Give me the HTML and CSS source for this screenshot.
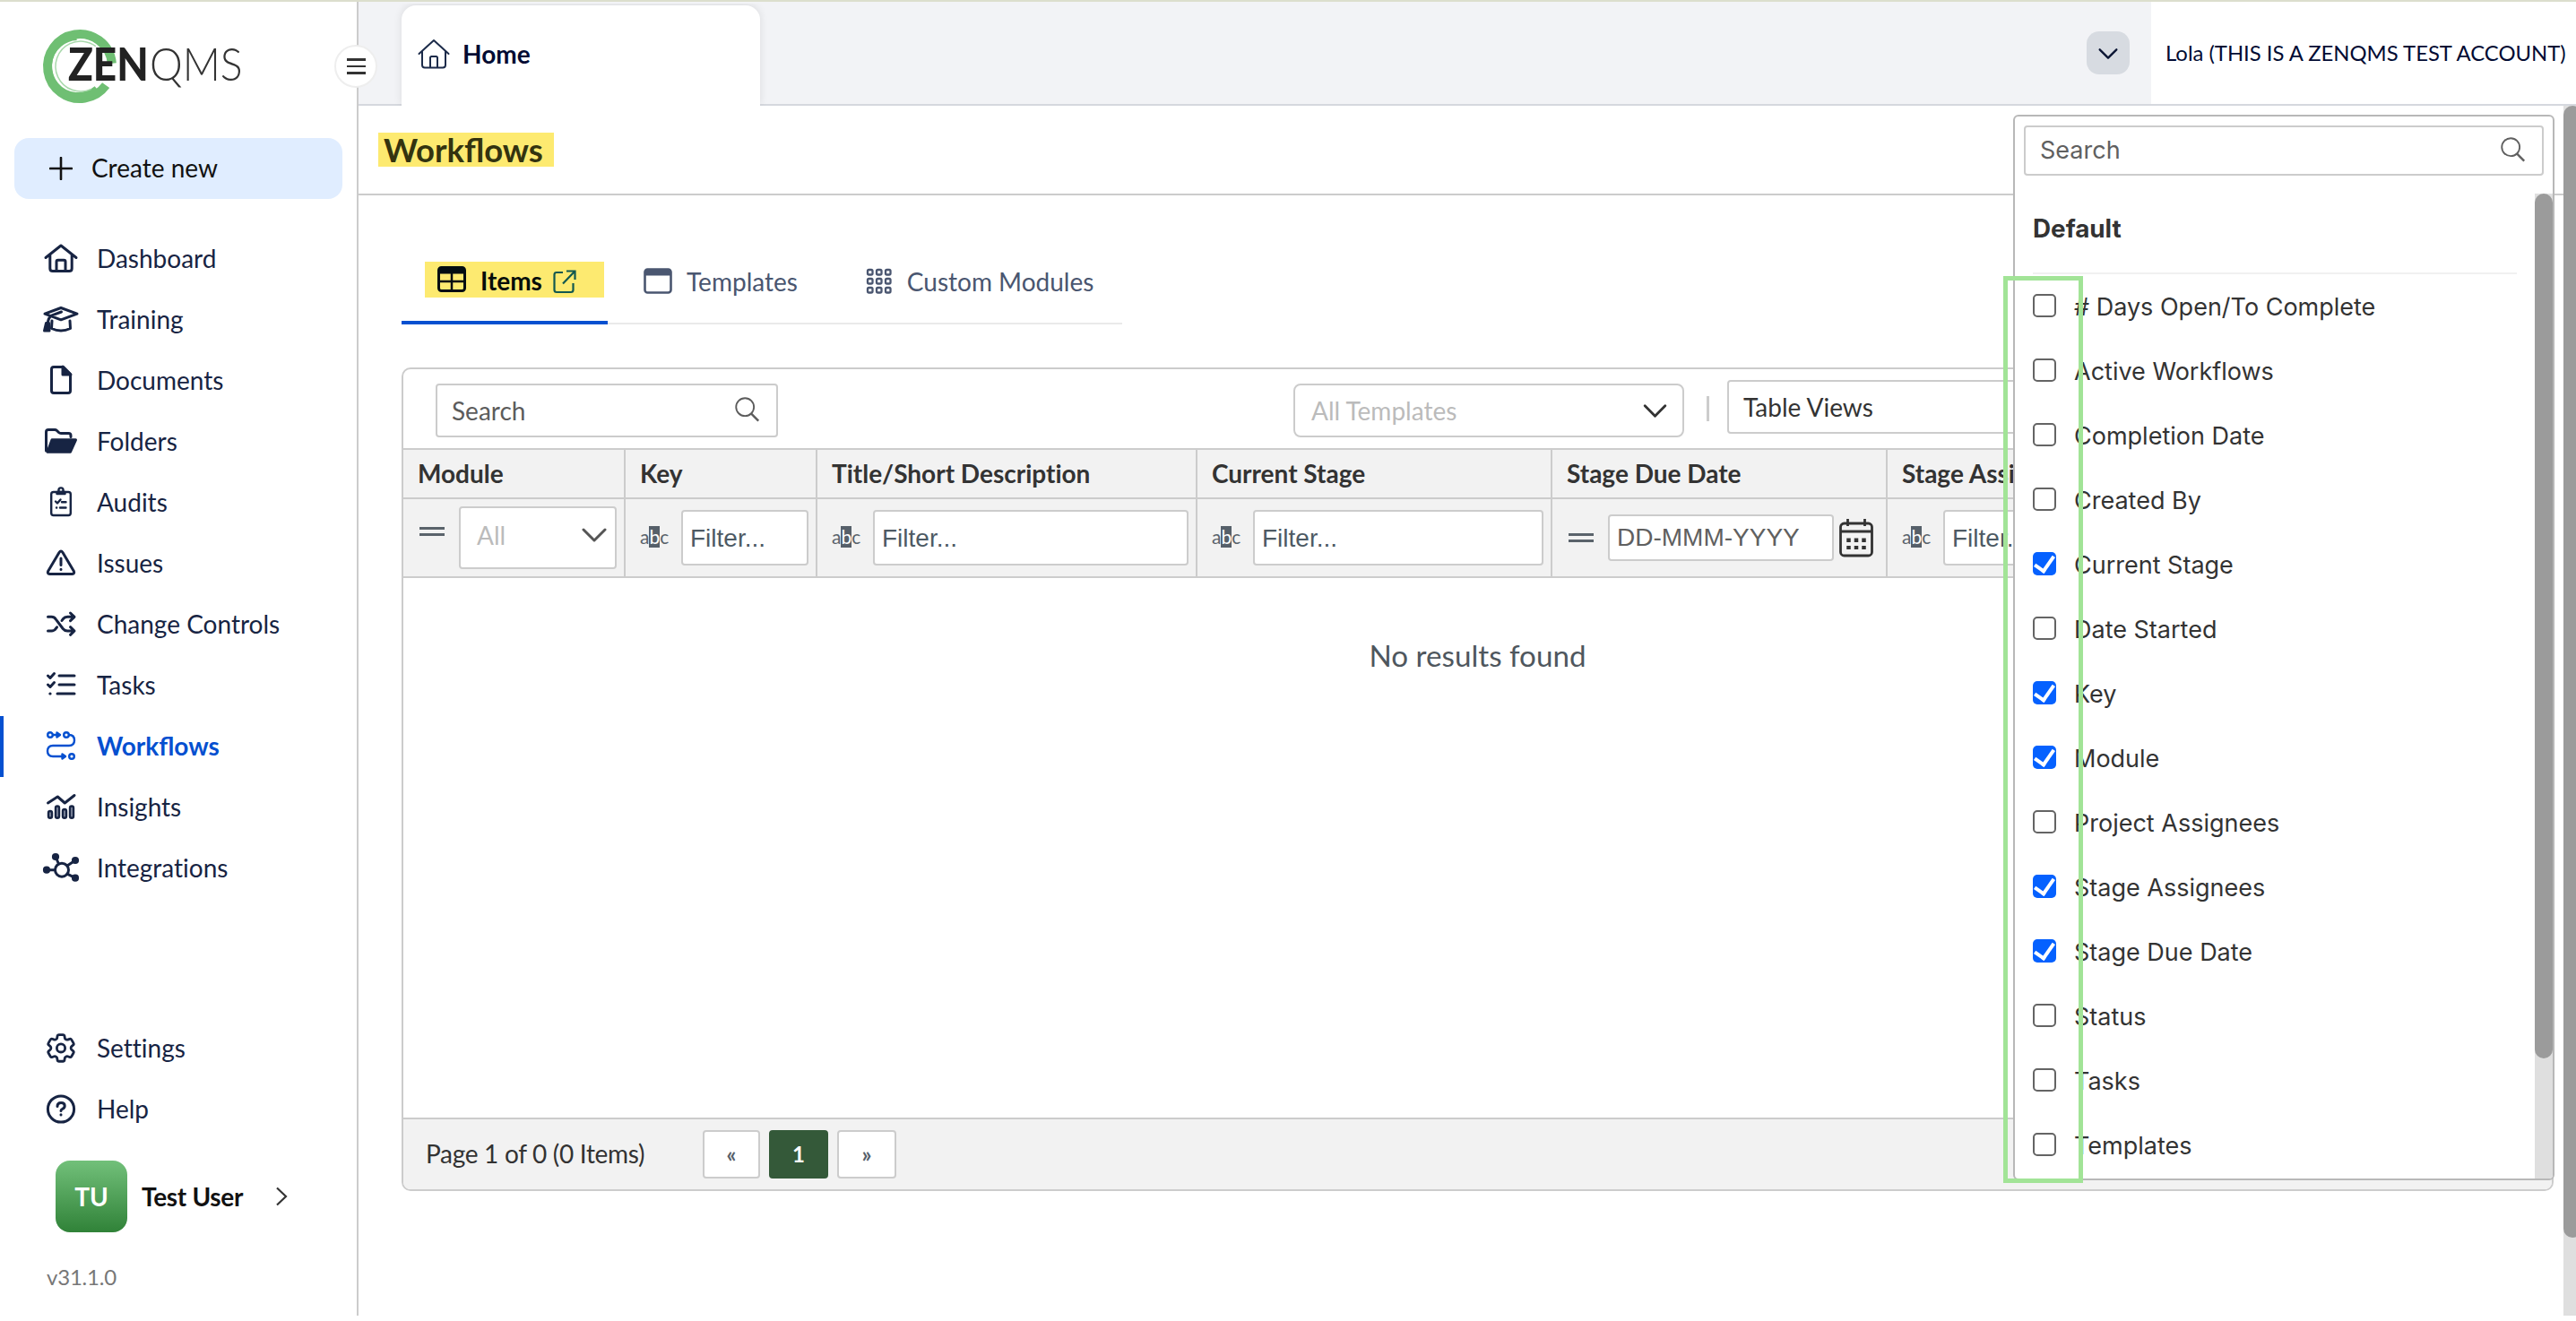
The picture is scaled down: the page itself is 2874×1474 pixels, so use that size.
FILE: index.html
```html
<!DOCTYPE html>
<html lang="en">
<head>
    <meta charset="UTF-8">
    <meta name="viewport" content="width=device-width, initial-scale=1.0">
    <title>ZenQMS - Workflows</title>
    <link rel="stylesheet" href="styles.css">
</head>
<body>
    <svg class="sprite" aria-hidden="true">
        <symbol id="search" viewBox="0 0 32 32">
            <circle cx="13" cy="13" r="10.6" fill="none" stroke="currentColor" stroke-width="2"/>
            <path d="M20.5 21 29 29.5" fill="none" stroke="currentColor" stroke-width="2.6"/>
        </symbol>
        <symbol id="chevron-down" viewBox="0 0 28 18">
            <path d="M2 3 14 15 26 3" fill="none" stroke="currentColor" stroke-width="3" stroke-linecap="round" stroke-linejoin="round"/>
        </symbol>
    </svg>

    <div class="app">
        <aside class="sidebar">
            <svg class="logo" viewBox="46 32 236 86">
                <g fill="none" stroke="#6fbf73">
                    <circle cx="89" cy="74" r="36" stroke-width="10" stroke-dasharray="200 50" transform="rotate(36 89 74)"/>
                    <circle cx="87" cy="74" r="33" stroke-width="8" stroke-dasharray="125 100" transform="rotate(50 87 74)"/>
                    <circle cx="90" cy="74" r="28" stroke="#a9d9ac" stroke-width="1.5" stroke-dasharray="118 60" transform="rotate(65 90 74)"/>
                </g>
                <text class="logo-zen" transform="translate(76 90) scale(0.9 1)">ZEN</text>
                <text class="logo-qms" transform="translate(167 90) scale(0.91 1)">QMS</text>
            </svg>

            <button class="create-btn">
                <svg width="26" height="26" viewBox="0 0 26 26"><path d="M13 1v24M1 13h24" stroke="currentColor" stroke-width="2.6" stroke-linecap="round"/></svg>
                Create new
            </button>

            <nav class="nav">
                <a class="nav-item">
                    <svg class="icon" viewBox="0 0 44 40"><path d="M5 18.5 22 5l17 13.5M9.8 15v15.5q0 3 3 3h18.4q3 0 3-3V15M17 33V23q0-1.7 1.7-1.7h6.6q1.7 0 1.7 1.7v10"/></svg>
                    Dashboard
                </a>
                <a class="nav-item">
                    <svg class="icon" viewBox="0 0 44 40"><path d="M4 13.2 22 6.5l18 6.7-18 6.6zM22.5 11 12 14.8Q7.5 17 7.2 25M12 21l-.5 8.5q10.500 5 21 0L32 21"/><path class="solid" d="M5.5 23.5h3L9 32H3.5z"/></svg>
                    Training
                </a>
                <a class="nav-item">
                    <svg class="icon" viewBox="0 0 44 40"><path d="M14 4.5h10.5l8 8V31q0 2.5-2.5 2.5H14q-2.5 0-2.5-2.5V7q0-2.500 2.500-2.500z"/><path class="solid" d="M24 4v9h9z"/></svg>
                    Documents
                </a>
                <a class="nav-item">
                    <svg class="icon" viewBox="0 0 44 40"><path d="M5.5 30V9q0-2.500 2.500-2.500h7q1.500 0 2.500 1l2 2q1 1 2.500 1h8.500q2.500 0 2.500 2.500v1.500"/><path class="solid" d="M12 17.800h26.500L32.500 31.200H7z"/></svg>
                    Folders
                </a>
                <a class="nav-item">
                    <svg class="icon thin" viewBox="0 0 44 40"><rect x="11.2" y="8" width="21.6" height="26" rx="2.5"/><circle cx="22" cy="6" r="2.6"/><path class="solid" d="M17.5 8h9v2h-9z"/><path d="m16 18.5 2 2 3.5-4M23 19.3h4.5M21 25.5h6.5M17 25.5h.2"/></svg>
                    Audits
                </a>
                <a class="nav-item">
                    <svg class="icon" viewBox="0 0 44 40"><path d="M20 7.500q2-3 4 0l12.300 20.700q1.300 3-1.800 3.300h-25q-3.100-.3-1.800-3.300zM22 14v7.500M22 26.300v.2"/></svg>
                    Issues
                </a>
                <a class="nav-item">
                    <svg class="icon" viewBox="0 0 44 40"><path d="M7.5 11.3h4q3 0 4.700 2.500l8 10.700q2 2.500 5 2.500H36M7.500 27h4q3 0 4.700-2.500l1.300-1.700M23 15.500l1.200-1.700q2-2.500 5-2.500H36M32.500 7l4.500 4.300-4.500 4.300M32.500 22.700 37 27l-4.500 4.300"/></svg>
                    Change Controls
                </a>
                <a class="nav-item">
                    <svg class="icon" viewBox="0 0 44 40"><path d="M20 9h17M20 19h17M18 29h19M7.5 9l2.500 2.500 4.500-5M7.500 19l2.500 2.500 4.500-5M9.800 29h.3"/></svg>
                    Tasks
                </a>
                <a class="nav-item active">
                    <svg class="icon thin" viewBox="0 0 44 40"><circle cx="10" cy="7" r="2.8"/><circle cx="28" cy="7" r="2.8"/><circle cx="34" cy="31" r="2.8"/><path d="M13 7h5M31 7q6 0 6 6t-6 6H13q-6 0-6 6t6 6h11"/><path class="solid" d="M17.5 4.5 21 7l-3.500 2.500zM23.500 28.500 27 31l-3.500 2.500z"/></svg>
                    Workflows
                </a>
                <a class="nav-item">
                    <svg class="icon thin" viewBox="0 0 44 40"><path class="bold" d="M7.5 15 18.3 8l8 7L37 6.5"/><g fill="#8b93a8"><rect x="8" y="24" width="4" height="7.8" rx="2"/><rect x="16" y="18.5" width="4" height="13.3" rx="2"/><rect x="24" y="22" width="4" height="9.8" rx="2"/><rect x="32" y="18.5" width="4" height="13.3" rx="2"/></g></svg>
                    Insights
                </a>
                <a class="nav-item">
                    <svg class="icon" viewBox="0 0 44 40"><circle cx="23" cy="21.7" r="7.5"/><path d="M6 21.7h9.5M16 7l3.5 8M38 11l-9 6M38 30.7l-9-4.5"/><g class="solid"><circle cx="6" cy="21.7" r="2.6"/><circle cx="16" cy="7" r="2.6"/><circle cx="38" cy="11" r="2.6"/><circle cx="38" cy="30.7" r="2.6"/></g></svg>
                    Integrations
                </a>
            </nav>

            <div class="sidebar-bottom">
                <a class="nav-item">
                    <svg class="icon" viewBox="0 0 44 40"><g transform="translate(2.2 -0.4) scale(1.65)" stroke-width="1.7"><path d="M9.594 3.940c.09-.542.56-.94 1.110-.94h2.593c.55 0 1.020.398 1.110.94l.213 1.281c.063.374.313.686.645.87.074.04.147.083.22.127.325.196.72.257 1.075.124l1.217-.456a1.125 1.125 0 0 1 1.370.49l1.296 2.247a1.125 1.125 0 0 1-.26 1.431l-1.003.827c-.293.241-.438.613-.43.992a7.723 7.723 0 0 1 0 .255c-.008.378.137.75.43.991l1.004.827c.424.35.534.955.26 1.430l-1.298 2.247a1.125 1.125 0 0 1-1.369.491l-1.217-.456c-.355-.133-.75-.072-1.076.124a6.470 6.470 0 0 1-.22.128c-.331.183-.581.495-.644.869l-.213 1.281c-.09.543-.56.94-1.110.94h-2.594c-.55 0-1.019-.398-1.110-.94l-.213-1.281c-.062-.374-.312-.686-.644-.87a6.520 6.520 0 0 1-.22-.127c-.325-.196-.72-.257-1.076-.124l-1.217.456a1.125 1.125 0 0 1-1.369-.49l-1.297-2.247a1.125 1.125 0 0 1 .26-1.431l1.004-.827c.292-.24.437-.613.43-.991a6.932 6.932 0 0 1 0-.255c.007-.38-.138-.751-.43-.992l-1.004-.827a1.125 1.125 0 0 1-.26-1.430l1.297-2.247a1.125 1.125 0 0 1 1.370-.491l1.216.456c.356.133.751.072 1.076-.124.072-.044.146-.086.22-.128.332-.183.582-.495.644-.869z"/><circle cx="12" cy="12" r="2.8"/></g></svg>
                    Settings
                </a>
                <a class="nav-item">
                    <svg class="icon" viewBox="0 0 44 40"><circle cx="22" cy="19.5" r="14.6"/><path d="M18 16.5q0-4 4.200-4 4 0 4 3.500 0 2.300-2.500 3.300Q22 20 22 21.500M22 25.700v.2"/></svg>
                    Help
                </a>
                <div class="user">
                    <span class="avatar">TU</span>
                    <span class="user-name">Test User</span>
                    <svg width="14" height="22" viewBox="0 0 14 22"><path d="m2 1.5 10 9.5-10 9.5" fill="none" stroke="#333" stroke-width="2.2"/></svg>
                </div>
                <p class="version">v31.1.0</p>
            </div>

            <button class="menu-toggle">
                <span></span><span></span><span></span>
            </button>
        </aside>

        <main class="main">
            <header class="topbar">
                <div class="tab-home">
                    <svg width="36" height="34" viewBox="0 0 36 34"><path d="M1.5 17 18 2l16.500 15M5 14v15.500q0 3 3 3h20q3 0 3-3V14M14 32V21.500q0-1.500 1.500-1.500h5q1.500 0 1.500 1.500V32" fill="none" stroke="#1c2b4a" stroke-width="2" stroke-linecap="round" stroke-linejoin="round"/></svg>
                    Home
                </div>
                <div class="topbar-right">
                    <button class="tabs-more"><svg width="22" height="14"><use href="#chevron-down"/></svg></button>
                    <div class="account">Lola (THIS IS A ZENQMS TEST ACCOUNT)</div>
                </div>
            </header>

            <div class="page-row">
                <div class="page">
                    <div class="page-title">
                        <h1>Workflows</h1>
                    </div>

                    <div class="tabs">
                        <a class="tab current">
                            <span class="mark">
                                <svg width="32" height="30" viewBox="0 0 32 30"><rect x="1.5" y="1.5" width="29" height="26" rx="3" fill="none" stroke="#020d12" stroke-width="3"/><path d="M1.5 5h29M16 8v20M2 17h28" stroke="#020d12" stroke-width="2.5"/><path d="M2 2.5h28v6H2z" fill="#020d12"/></svg>
                                <b>Items</b>
                                <svg class="external" width="26" height="27" viewBox="0 0 26 27"><path d="M11 3H4Q1.500 3 1.500 5.500v17Q1.500 25 4 25h16q2.500 0 2.500-2.500V15M15 1.500h9.500V11M24 2 11 15.500" fill="none" stroke="#12584f" stroke-width="2.2"/></svg>
                            </span>
                        </a>
                        <a class="tab">
                            <svg width="32" height="29" viewBox="0 0 32 29"><rect x="1.5" y="1.5" width="29" height="26" rx="3" fill="none" stroke="currentColor" stroke-width="2.6"/><path d="M2 2h28v6.5H2z" fill="currentColor"/></svg>
                            Templates
                        </a>
                        <a class="tab modules">
                            <svg width="30" height="30" viewBox="0 0 30 30"><g fill="none" stroke="currentColor" stroke-width="2.3"><rect x="2" y="2" width="5.5" height="5.5" rx="1.5"/><rect x="12" y="2" width="5.5" height="5.5" rx="1.5"/><rect x="22" y="2" width="5.5" height="5.5" rx="1.5"/><rect x="2" y="12" width="5.5" height="5.5" rx="1.5"/><rect x="12" y="12" width="5.5" height="5.5" rx="1.5"/><rect x="22" y="12" width="5.5" height="5.5" rx="1.5"/><rect x="2" y="22" width="5.5" height="5.5" rx="1.5"/><rect x="12" y="22" width="5.5" height="5.5" rx="1.5"/><rect x="22" y="22" width="5.5" height="5.5" rx="1.5"/></g></svg>
                            Custom Modules
                        </a>
                    </div>

                    <section class="grid-panel">
                        <div class="toolbar">
                            <div class="search-box">Search <svg width="30" height="30"><use href="#search"/></svg></div>
                            <div class="template-select">All Templates <svg width="27" height="17"><use href="#chevron-down"/></svg></div>
                            <span class="separator"></span>
                            <div class="views-select">Table Views</div>
                        </div>

                        <div class="grid-row head">
                            <div>Module</div>
                            <div>Key</div>
                            <div>Title/Short Description</div>
                            <div>Current Stage</div>
                            <div>Stage Due Date</div>
                            <div>Stage Assignees</div>
                        </div>

                        <div class="grid-row filters">
                            <div class="module-filter">
                                <span class="equals up"></span>
                                <span class="all-select">All <svg width="28" height="18"><use href="#chevron-down"/></svg></span>
                            </div>
                            <div><span class="abc">a<i>b</i>c</span><span class="filter">Filter...</span></div>
                            <div><span class="abc">a<i>b</i>c</span><span class="filter">Filter...</span></div>
                            <div><span class="abc">a<i>b</i>c</span><span class="filter">Filter...</span></div>
                            <div class="date-filter">
                                <span class="equals"></span>
                                <span class="filter date">DD-MMM-YYYY</span>
                                <svg width="38" height="44" viewBox="0 0 38 44"><g fill="none" stroke="#333" stroke-width="2.8"><rect x="1.5" y="6" width="35" height="36" rx="4"/><path d="M2 15h34M9.5 1v8M28.5 1v8"/></g><path d="M10.5 22.5v12.500M19 22.500v12.500M27.500 22.500v12.500" stroke="#333" stroke-width="4.5" stroke-dasharray="4.5 4"/></svg>
                            </div>
                            <div><span class="abc">a<i>b</i>c</span><span class="filter">Filter...</span></div>
                        </div>

                        <div class="empty">No results found</div>

                        <div class="pager">
                            <span class="pager-info">Page 1 of 0 (0 Items)</span>
                            <a class="page-btn prev">«</a>
                            <a class="page-btn on">1</a>
                            <a class="page-btn">»</a>
                        </div>
                    </section>
                </div>

                <div class="scrollbar page-scroll"><span></span></div>
            </div>

            <!-- Column chooser -->
            <div class="chooser">
                <div class="chooser-search">Search <svg width="30" height="30"><use href="#search"/></svg></div>
                <div class="chooser-body">
                    <div class="chooser-list">
                        <h2>Default</h2>
                        <label><input type="checkbox"># Days Open/To Complete</label>
                        <label><input type="checkbox">Active Workflows</label>
                        <label><input type="checkbox">Completion Date</label>
                        <label><input type="checkbox">Created By</label>
                        <label><input type="checkbox" checked>Current Stage</label>
                        <label><input type="checkbox">Date Started</label>
                        <label><input type="checkbox" checked>Key</label>
                        <label><input type="checkbox" checked>Module</label>
                        <label><input type="checkbox">Project Assignees</label>
                        <label><input type="checkbox" checked>Stage Assignees</label>
                        <label><input type="checkbox" checked>Stage Due Date</label>
                        <label><input type="checkbox">Status</label>
                        <label><input type="checkbox">Tasks</label>
                        <label><input type="checkbox">Templates</label>
                    </div>
                    <div class="scrollbar chooser-scroll"><span></span></div>
                </div>
            </div>
            <div class="callout"></div>
        </main>
    </div>
</body>
</html>
```
FILE: styles.css
```css
* {
    box-sizing: border-box;
}

body {
    margin: 0;
    height: 1474px;
    overflow: hidden;
    background-color: #fff;
    font-family: "Lato", sans-serif;
    font-size: 28px;
    font-variant-ligatures: none;
    line-height: 34px;
    color: #333;
}

h1, h2, p {
    margin: 0;
}

button {
    border: none;
    padding: 0;
    font: inherit;
    cursor: pointer;
}

svg {
    flex: none;
    display: block;
}

.sprite {
    position: absolute;
    width: 0;
    height: 0;
}

.app {
    display: flex;
    height: 1468px;
    border-top: 2px solid #dcdecd;
}

/* Sidebar */
.sidebar {
    position: relative;
    display: flex;
    flex-direction: column;
    flex: none;
    width: 400px;
    border-right: 2px solid #ccc;
}

.logo {
    width: 236px;
    height: 86px;
    margin: 30px 0 36px 46px;
    overflow: visible;
}

.logo-zen {
    font-size: 51px;
    font-weight: 900;
    fill: #222;
}

.logo-qms {
    font-size: 51px;
    font-weight: 300;
    fill: #333;
}

.create-btn {
    display: flex;
    align-items: center;
    gap: 21px;
    width: 366px;
    height: 68px;
    margin-left: 16px;
    padding: 0 0 2px 39px;
    border-radius: 16px;
    background-color: #e0edff;
    color: #111;
}

.create-btn svg {
    margin-top: 2px;
}

.nav {
    margin-top: 33px;
}

.nav-item {
    display: flex;
    align-items: center;
    gap: 18px;
    height: 68px;
    padding: 0 0 2px 46px;
    color: #172443;
}

.nav-item.active {
    padding-left: 42px;
    border-left: 4px solid #0550d0;
    border-radius: 0 4px 4px 0;
    color: #0550d0;
    font-weight: bold;
    font-variant-ligatures: normal;
}

.icon {
    width: 44px;
    height: 40px;
    margin-top: 2px;
    fill: none;
    stroke: currentColor;
    stroke-width: 3;
    stroke-linecap: round;
    stroke-linejoin: round;
}

.icon.thin {
    stroke-width: 2.4;
}

.icon .bold {
    stroke-width: 3;
}

.icon .solid {
    fill: currentColor;
}

.sidebar-bottom {
    margin-top: 133px;
}

.user {
    display: flex;
    align-items: center;
    height: 80px;
    margin-top: 23px;
    padding-left: 62px;
}

.avatar {
    width: 80px;
    height: 80px;
    border-radius: 16px;
    background: linear-gradient(#72c07a, #308238);
    color: #fff;
    font-weight: bold;
    line-height: 80px;
    text-align: center;
}

.user-name {
    width: 165px;
    padding-left: 16px;
    color: #111;
    font-weight: bold;
    letter-spacing: -0.3px;
}

.version {
    margin-top: 33px;
    padding-left: 52px;
    color: #777;
    font-size: 24px;
    letter-spacing: -0.2px;
}

.menu-toggle {
    position: absolute;
    top: 48px;
    right: -23px;
    display: flex;
    flex-direction: column;
    align-items: center;
    justify-content: center;
    gap: 5px;
    width: 48px;
    height: 48px;
    border: 2px solid #eee;
    border-radius: 50%;
    background-color: #fff;
    z-index: 2;
}

.menu-toggle span {
    width: 21px;
    height: 2.5px;
    background-color: #333;
}

/* Top bar */
.main {
    position: relative;
    display: flex;
    flex-direction: column;
    flex: 1;
    min-width: 0;
}

.topbar {
    display: flex;
    justify-content: space-between;
    flex: none;
    height: 116px;
    border-bottom: 2px solid #d5d8de;
    background-color: #f2f3f6;
}

.tab-home {
    display: flex;
    align-items: center;
    gap: 14px;
    width: 400px;
    height: 112px;
    margin: 4px 0 0 48px;
    padding: 0 0 4px 18px;
    border-radius: 16px 16px 0 0;
    background-color: #fff;
    box-shadow: 0 -1px 10px rgba(0, 0, 0, 0.1);
    clip-path: inset(-2px -12px 0 -12px);
    color: #020b33;
    font-weight: bold;
}

.topbar-right {
    display: flex;
    align-items: center;
    height: 114px;
}

.tabs-more {
    display: flex;
    align-items: center;
    justify-content: center;
    width: 48px;
    height: 48px;
    margin: 0 24px 0 0;
    padding-top: 2px;
    border-radius: 14px;
    background-color: #d7dbe1;
    color: #0b1533;
}

.account {
    width: 474px;
    height: 114px;
    padding-left: 16px;
    background-color: #fff;
    color: #020b33;
    font-size: 23.85px;
    line-height: 114px;
    white-space: nowrap;
}

/* Page */
.page-row {
    display: flex;
    flex: 1;
}

.page {
    flex: 1;
    min-width: 0;
}

.page-title {
    display: flex;
    align-items: flex-start;
    height: 100px;
    padding: 30px 0 0 22px;
    border-bottom: 2px solid #ccc;
}

h1 {
    height: 38px;
    padding: 0 12px 0 6px;
    background-color: #fdea70;
    color: #33330f;
    font-size: 36.4px;
    font-variant-ligatures: normal;
    line-height: 38px;
}

.tabs {
    display: flex;
    width: 804px;
    height: 92px;
    margin: 52px 0 0 48px;
    border-bottom: 2px solid #eaeaea;
}

.tab {
    display: flex;
    align-items: center;
    gap: 16px;
    height: 92px;
    padding: 0 36px 5px 40px;
    color: #4a5670;
    white-space: nowrap;
}

.tab.modules {
    padding-right: 0;
}

.tab.current {
    width: 230px;
    padding: 0 0 4px 26px;
    border-bottom: 4px solid #0550d0;
}

.mark {
    display: flex;
    align-items: center;
    width: 200px;
    height: 40px;
    padding-left: 14px;
    background-color: #fdea70;
    color: #050d0a;
}

.mark b {
    margin: 1px 12px 0 16px;
}

.external {
    margin-top: 5px;
}

/* Grid */
.grid-panel {
    display: flex;
    flex-direction: column;
    width: 2401px;
    height: 919px;
    margin: 48px 0 0 48px;
    border: 2px solid #ccc;
    border-radius: 10px;
    overflow: hidden;
}

.toolbar {
    display: flex;
    align-items: flex-start;
    height: 88px;
    padding: 16px 0 0 36px;
}

.search-box,
.template-select,
.views-select,
.all-select,
.chooser-search {
    display: flex;
    align-items: center;
    justify-content: space-between;
    border: 2px solid #ccc;
    border-radius: 4px;
    background-color: #fff;
}

.search-box {
    width: 382px;
    height: 60px;
    padding: 0 17px 0 16px;
    color: #5c5c5c;
}

.search-box svg {
    margin-top: -3px;
}

.template-select {
    width: 436px;
    height: 60px;
    margin-left: 575px;
    padding: 0 17px 0 18px;
    border-radius: 8px;
    color: #bbb;
}

.template-select svg {
    color: #333;
}

.separator {
    width: 3px;
    height: 28px;
    margin: 14px 20px 0 25px;
    background-color: #ccc;
}

.views-select {
    width: 880px;
    height: 60px;
    margin-top: -4px;
    padding: 0 0 0 16px;
}

.grid-row {
    display: grid;
    grid-template-columns: 248px 214px 424px 396px 374px 1fr;
    border-top: 2px solid #ccc;
    background-color: #f2f2f2;
}

.grid-row > div {
    display: flex;
    align-items: center;
    min-width: 0;
    padding: 0 8px 0 16px;
    border-right: 2px solid #ccc;
    white-space: nowrap;
}

.grid-row > div:last-child {
    border-right: none;
}

.head {
    height: 55px;
    font-weight: bold;
}

.grid-row.head > div {
    padding-bottom: 2px;
}

.filters {
    height: 90px;
    border-bottom: 2px solid #ccc;
}

.equals {
    width: 28px;
    height: 10px;
    border: solid #5a636b;
    border-width: 3px 0;
}

.equals.up {
    margin-top: -14px;
}

.grid-row > .module-filter {
    padding-left: 18px;
}

.all-select {
    width: 176px;
    height: 70px;
    margin: -1px 0 0 16px;
    padding: 0 9px 6px 18px;
    color: #bbb;
}

.all-select svg {
    color: #555;
}

.abc {
    display: flex;
    flex: none;
    width: 32px;
    margin: -2px 14px 0 0;
    color: #5a636b;
    font-size: 21px;
    line-height: 24px;
}

.abc i {
    width: 13px;
    background-color: #56606a;
    color: #fff;
    font-style: normal;
    text-align: center;
}

.filter {
    flex: 1;
    height: 62px;
    margin-top: -1px;
    padding-left: 8px;
    border: 2px solid #ccc;
    border-radius: 4px;
    background-color: #fff;
    color: #4d5a64;
    font-family: "Liberation Sans", Arial, sans-serif;
    line-height: 59px;
}

.filter.date {
    flex: none;
    width: 252px;
    height: 52px;
    margin: 0 6px 0 16px;
    color: #606060;
    line-height: 48px;
}

.grid-row > .date-filter {
    padding: 0 0 0 18px;
}

.empty {
    flex: 1;
    padding: 66px 0 0 0;
    color: #4f575e;
    font-size: 33.2px;
    line-height: 40px;
    text-align: center;
}

.pager {
    display: flex;
    align-items: center;
    height: 80px;
    padding-left: 25px;
    border-top: 2px solid #ccc;
    background-color: #f2f2f2;
}

.pager-info {
    width: 309px;
    padding-bottom: 2px;
    letter-spacing: -0.3px;
}

.page-btn {
    width: 66px;
    height: 54px;
    margin-right: 10px;
    border: 2px solid #ccc;
    border-radius: 4px;
    background-color: #fff;
    color: #56606a;
    font-size: 24px;
    font-weight: bold;
    line-height: 50px;
    text-align: center;
}

.page-btn.prev {
    width: 64px;
}

.page-btn.on {
    border-color: #345939;
    background-color: #345939;
    color: #fff;
}

/* Scrollbars */
.scrollbar {
    flex: none;
    background-color: #dfdfdf;
}

.scrollbar span {
    display: block;
    background-color: #9b9b9b;
}

.page-scroll {
    width: 14px;
    overflow: hidden;
}

.page-scroll span {
    width: 20px;
    height: 1263px;
    border-radius: 10px;
}

.chooser-scroll {
    width: 20px;
}

.chooser-scroll span {
    height: 965px;
    border-radius: 10px;
}

/* Column chooser dropdown */
.chooser {
    position: absolute;
    top: 126px;
    left: 1846px;
    display: flex;
    flex-direction: column;
    width: 604px;
    height: 1189px;
    border: 2px solid #b8b8b8;
    border-radius: 6px;
    background-color: #fff;
    font-family: "Inter", sans-serif;
    font-size: 27px;
    overflow: hidden;
}

.chooser-search {
    flex: none;
    width: 580px;
    height: 56px;
    margin: 10px 0 0 10px;
    padding: 0 17px 0 16px;
    color: #606060;
}

.chooser-search svg {
    margin-top: -3px;
}

.chooser-body {
    display: flex;
    flex: 1;
    justify-content: space-between;
    min-height: 0;
    margin-top: 20px;
}

.chooser-list {
    width: 560px;
    padding-left: 20px;
}

h2 {
    height: 90px;
    border-bottom: 2px solid #f1f1f1;
    font-size: 27.8px;
    line-height: 78px;
}

.chooser-list label {
    display: flex;
    align-items: center;
    height: 72px;
    padding-top: 1px;
}

.chooser-list input {
    appearance: none;
    width: 26px;
    height: 26px;
    margin: -3px 20px 0 0;
    border: 2px solid #646464;
    border-radius: 5px;
    background-color: #fff;
}

.chooser-list input:checked {
    display: flex;
    align-items: center;
    justify-content: center;
    border: none;
    background-color: #0561ff;
}

.chooser-list input:checked::before {
    content: "";
    width: 10px;
    height: 18px;
    margin-top: -4px;
    border: solid #fff;
    border-width: 0 4px 4px 0;
    transform: rotate(35deg);
}

/* Outline drawn round the checkbox column */
.callout {
    position: absolute;
    top: 306px;
    left: 1835px;
    width: 89px;
    height: 1012px;
    border: 5px solid #a2e497;
}
```
